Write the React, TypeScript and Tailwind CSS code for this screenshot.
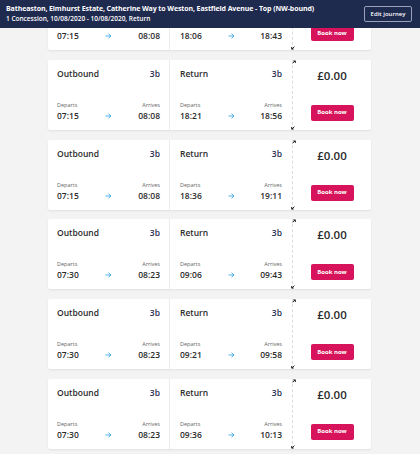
import React from 'react'

interface Journey {
  outDep: string
  outArr: string
  retDep: string
  retArr: string
}

const journeys: Journey[] = [
  { outDep: '07:15', outArr: '08:08', retDep: '18:06', retArr: '18:43' },
  { outDep: '07:15', outArr: '08:08', retDep: '18:21', retArr: '18:56' },
  { outDep: '07:15', outArr: '08:08', retDep: '18:36', retArr: '19:11' },
  { outDep: '07:30', outArr: '08:23', retDep: '09:06', retArr: '09:43' },
  { outDep: '07:30', outArr: '08:23', retDep: '09:21', retArr: '09:58' },
  { outDep: '07:30', outArr: '08:23', retDep: '09:36', retArr: '10:13' },
]

const font = { fontFamily: '"Open Sans", "Noto Sans", sans-serif' }

const Arrow = () => (
  <svg width="7" height="6" viewBox="0 0 7 6" className="mb-[2px]">
    <path d="M0.5 3h5.5M3.5 0.7L6 3 3.5 5.3" fill="none" stroke="#3aa8e4" strokeWidth="0.9" />
  </svg>
)

const Notch = ({ flip }: { flip?: boolean }) => (
  <svg width="4" height="4" viewBox="0 0 5 5" className={flip ? 'rotate-180' : ''}>
    <path d="M0.8 4.2L4 1M1.6 1.2h2.6v2.6" fill="none" stroke="#222" strokeWidth="1.2" />
  </svg>
)

const Leg = ({ title, dep, arr, width, px }: { title: string; dep: string; arr: string; width: string; px: string }) => (
  <div className={`${width} ${px} flex flex-col justify-between pt-[8px] pb-[9px]`}>
    <div className="flex items-center justify-between leading-[12px]">
      <span className="text-[8.5px] font-semibold text-[#2b2b2b]">{title}</span>
      <span className="text-[8.5px] font-semibold text-[#2a2f52]">3b</span>
    </div>
    <div>
      <div className="flex justify-between text-[5.5px] leading-[8px] text-[#666]">
        <span>Departs</span>
        <span>Arrives</span>
      </div>
      <div className="flex items-end justify-between mt-[1px] text-[8.5px] leading-[11px] font-semibold text-[#2b2b2b]">
        <span className="w-[30px]">{dep}</span>
        <Arrow />
        <span className="w-[30px] text-right">{arr}</span>
      </div>
    </div>
  </div>
)

const Card = ({ j }: { j: Journey }) => (
  <div className="flex h-[70px] bg-white shadow-[0_1px_2px_rgba(0,0,0,0.08)] rounded-[2px]">
    <Leg title="Outbound" dep={j.outDep} arr={j.outArr} width="w-[121px]" px="px-[9px]" />
    <div className="w-px bg-[#ececec]" />
    <Leg title="Return" dep={j.retDep} arr={j.retArr} width="w-[122px]" px="px-[10px]" />
    <div className="relative w-0 border-l border-dashed border-[#dcdcdc]">
      <div className="absolute top-[0px] -left-[1px] leading-none">
        <Notch />
      </div>
      <div className="absolute bottom-[0px] -left-[2px] leading-none">
        <Notch flip />
      </div>
    </div>
    <div className="flex-1 flex flex-col items-center pt-[9px]">
      <div className="text-[11.5px] leading-[14px] font-semibold text-[#2b2b2b]">£0.00</div>
      <button className="mt-[22px] w-[43px] h-[16px] rounded-[2px] bg-[#d6135b] text-white text-[6px] font-bold">
        Book now
      </button>
    </div>
  </div>
)

export default function App() {
  return (
    <div className="relative w-[420px] h-[454px] overflow-hidden bg-[#f3f3f3]" style={font}>
      <div className="absolute top-0 left-0 right-0 z-10 h-[28px] bg-[#1f2a4f] flex items-center justify-between pl-[6px] pr-[8px]">
        <div className="text-white">
          <div className="text-[7px] leading-[10px] font-bold tracking-[-0.1px]">
            Batheaston, Elmhurst Estate, Catherine Way to Weston, Eastfield Avenue - Top (NW-bound)
          </div>
          <div className="text-[6.5px] leading-[10px] font-semibold">1 Concession, 10/08/2020 - 10/08/2020, Return</div>
        </div>
        <button className="w-[48px] h-[16px] border border-[#9aa1b8] rounded-[2px] text-white text-[6px] font-semibold">
          Edit journey
        </button>
      </div>
      <div className="flex flex-col gap-[9.8px] mt-[-20px] ml-[48px] w-[323px]">
        {journeys.map((j, i) => (
          <Card key={i} j={j} />
        ))}
      </div>
    </div>
  )
}
